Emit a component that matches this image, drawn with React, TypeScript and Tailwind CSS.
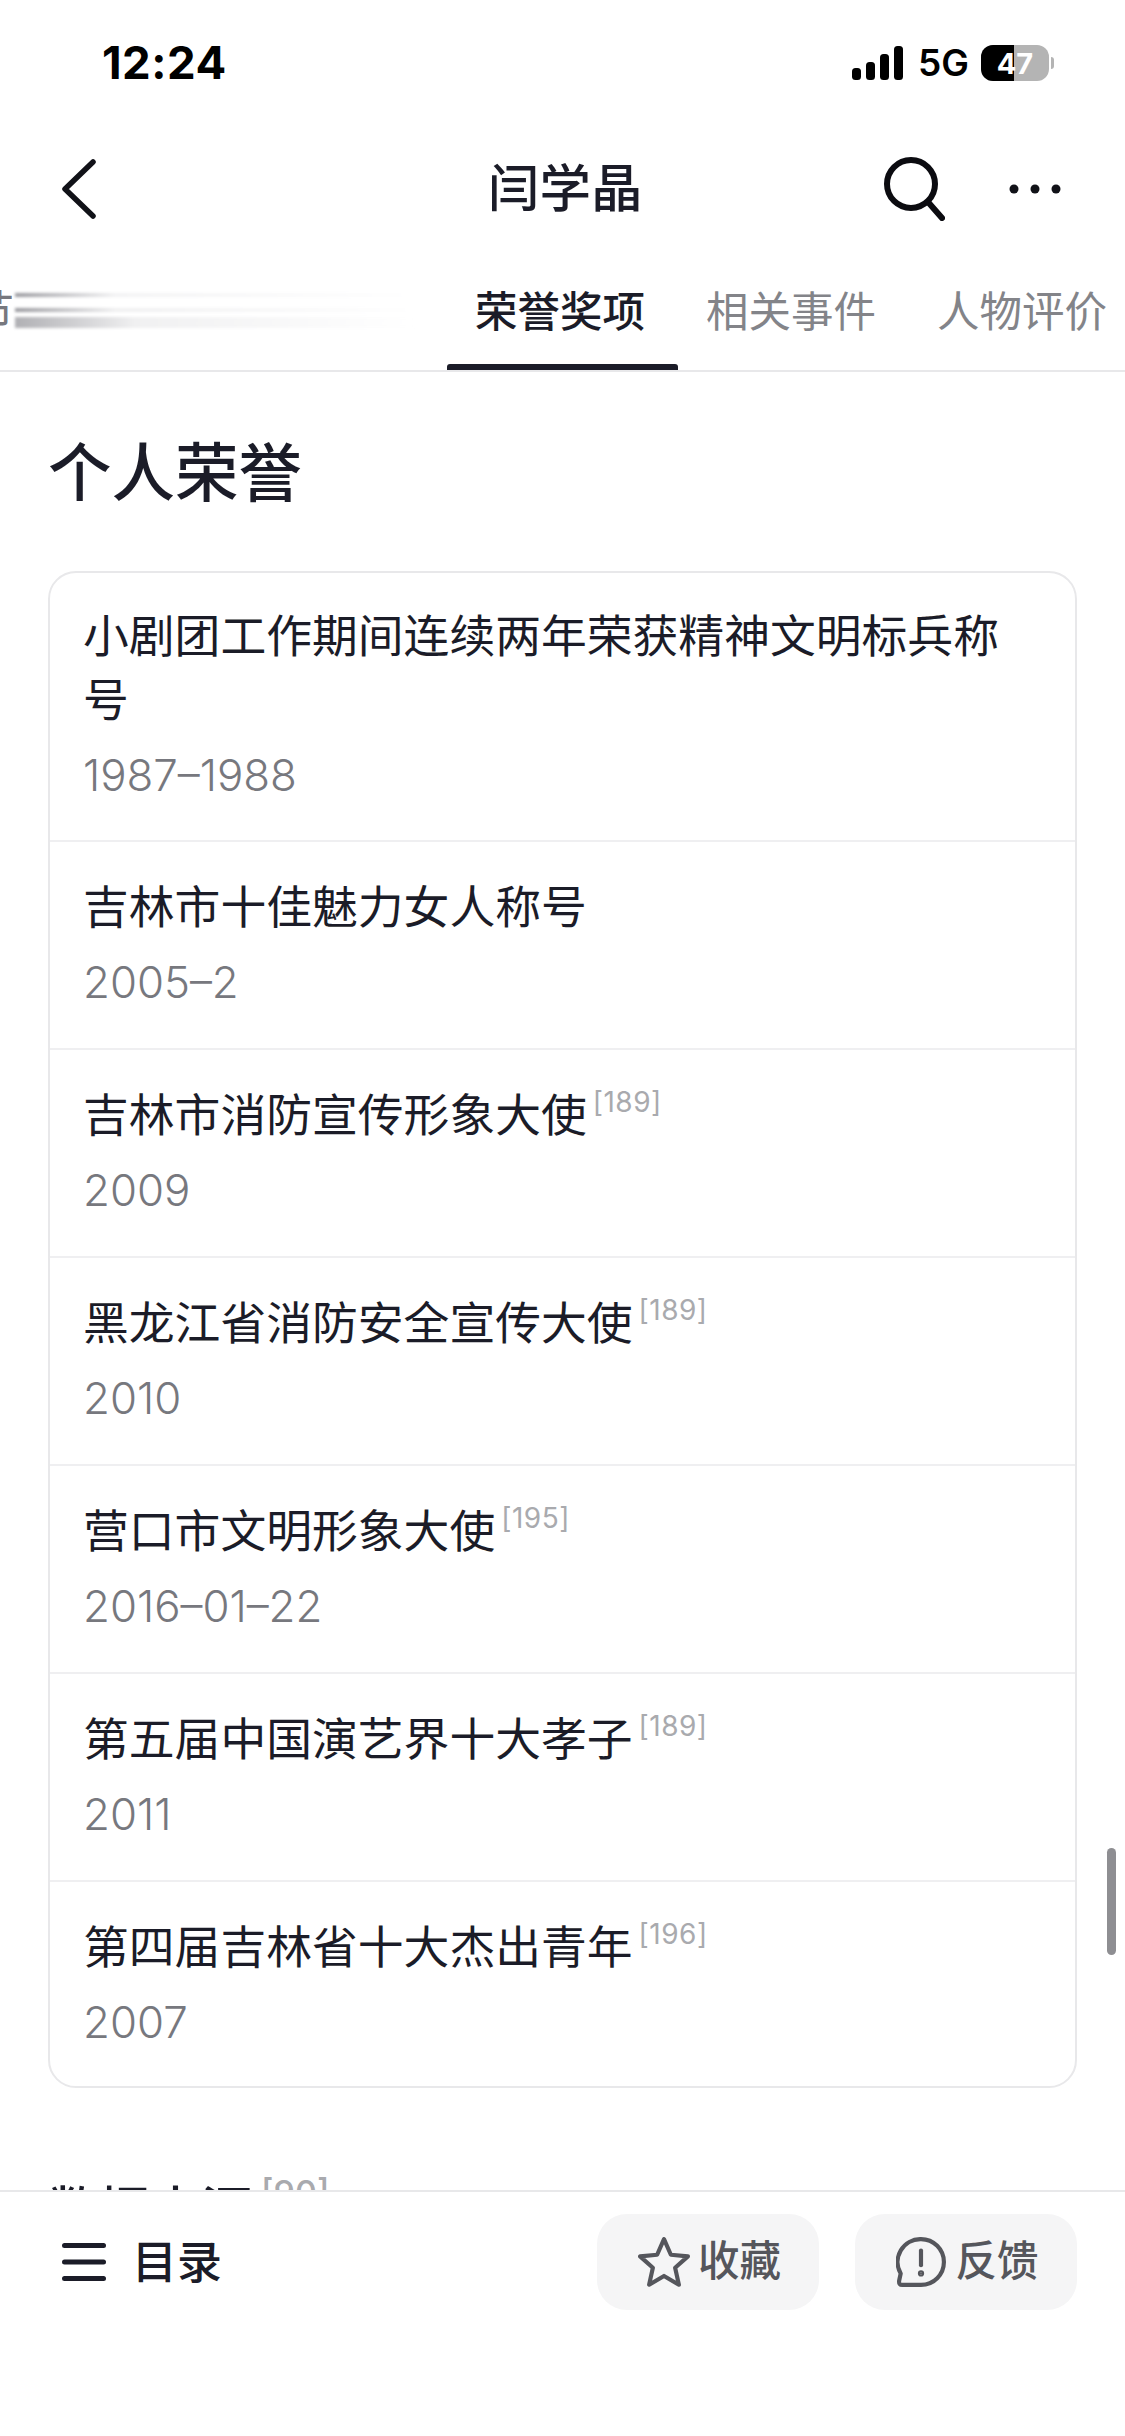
const honors = [
  { title: "小剧团工作期间连续两年荣获精神文明标兵称号", date: "1987–1988" },
  { title: "吉林市十佳魅力女人称号", date: "2005–2" },
  { title: "吉林市消防宣传形象大使", date: "2009", ref: "189" },
  { title: "黑龙江省消防安全宣传大使", date: "2010", ref: "189" },
  { title: "营口市文明形象大使", date: "2016–01–22", ref: "195" },
  { title: "第五届中国演艺界十大孝子", date: "2011", ref: "189" },
  { title: "第四届吉林省十大杰出青年", date: "2007", ref: "196" },
];

function StatusBar() {
  return (
    <div className="flex h-[124px] shrink-0 items-center justify-between pl-[102px] pr-[71px] pt-[2px]">
      <span className="text-[45.5px] font-bold tracking-[0.5px] text-black">12:24</span>
      <div className="flex items-center">
        <svg width="52" height="34" viewBox="0 0 52 34" fill="#000">
          <rect x="0" y="22" width="9" height="12" rx="3.5" />
          <rect x="14" y="16" width="9" height="18" rx="3.5" />
          <rect x="28" y="8" width="9" height="26" rx="3.5" />
          <rect x="42" y="0" width="9" height="34" rx="3.5" />
        </svg>
        <span className="ml-[14px] text-[37px] font-semibold text-black">5G</span>
        <div className="relative ml-[12px] flex h-[36px] w-[68px] overflow-hidden rounded-[12px] bg-[#b4b4b4]">
          <div className="h-full w-[33px] bg-black" />
          <span className="absolute inset-0 flex items-center justify-center text-[29px] font-bold leading-none text-white">
            47
          </span>
        </div>
        <div className="ml-[2px] h-[12px] w-[3px] rounded-r-full bg-[#b4b4b4]" />
      </div>
    </div>
  );
}

function NavBar() {
  return (
    <div className="relative flex h-[130px] shrink-0 items-center justify-between pl-[62px] pr-[64px]">
      <svg width="34" height="60" viewBox="0 0 34 60" fill="none" stroke="#111218" strokeWidth="5.5" strokeLinecap="round" strokeLinejoin="round">
        <path d="M31 3 L3 30 L31 57" />
      </svg>
      <span className="absolute left-[488px] text-[51.5px] font-medium leading-none text-[#1b1c28]">闫学晶</span>
      <div className="flex items-center gap-[64px]">
        <svg width="62" height="64" viewBox="0 0 62 64" fill="none" stroke="#0b0b10" strokeWidth="6" strokeLinecap="round">
          <circle cx="28" cy="27" r="24" />
          <path d="M45 45 L59 61" />
        </svg>
        <svg width="52" height="10" viewBox="0 0 52 10" fill="#111218">
          <circle cx="5" cy="5" r="4.5" />
          <circle cx="26" cy="5" r="4.5" />
          <circle cx="47" cy="5" r="4.5" />
        </svg>
      </div>
    </div>
  );
}

function TabBar() {
  return (
    <div className="relative flex h-[118px] shrink-0 items-center overflow-hidden border-b-2 border-[#e8e8ea]">
      <span className="ml-[-30px] text-[44px] leading-none text-[#77787e]">节</span>
      {/* blurred-out tab */}
      <div className="mb-[4px] ml-[1px] flex w-[400px] flex-col">
        <div className="h-[4px] bg-gradient-to-r from-[#9a9a9f] via-[#f3f3f4] via-25% to-white blur-[1.5px]" />
        <div className="mt-[11px] h-[4px] bg-gradient-to-r from-[#9a9a9f] via-[#f0f0f1] via-25% to-white blur-[1.5px]" />
        <div className="mt-[5px] h-[11px] bg-gradient-to-r from-[#b0b0b4] via-[#f0f0f1] via-30% to-white blur-[1.5px]" />
      </div>
      <span className="ml-[60px] text-[42.5px] font-medium leading-none text-[#1b1c28]">荣誉奖项</span>
      <span className="ml-[61px] text-[42.5px] leading-none text-[#838489]">相关事件</span>
      <span className="ml-[61px] whitespace-nowrap text-[42.5px] leading-none text-[#838489]">人物评价</span>
      <div className="absolute bottom-0 left-[447px] h-[6px] w-[231px] rounded-t-[3px] bg-[#1b1c28]" />
    </div>
  );
}

function HonorRow({ title, date, ref: refNo }: { title: string; date: string; ref?: string }) {
  return (
    <div className="border-b-2 border-[#efeff1] px-[33px] pb-[33px] pt-[34px] first:pb-[32px] first:pt-[32px] last:border-b-0 last:pb-[31px]">
      <div className="text-[45.8px] leading-[64px] text-[#1b1c28]">
        {title}
        {refNo ? (
          <sup className="relative top-[-20px] ml-[6px] align-baseline text-[28px] leading-none tracking-[0.5px] text-[#a9aaae]">
            [{refNo}]
          </sup>
        ) : null}
      </div>
      <div className="mt-[11px] text-[43.8px] font-light leading-[64px] text-[#77787e]">{date}</div>
    </div>
  );
}

function BottomBar() {
  return (
    <div className="flex h-[246px] shrink-0 items-start justify-between border-t-2 border-[#e8e8ea] bg-white pl-[62px] pr-[48px] pt-[22px]">
      <div className="flex h-[96px] items-center">
        <svg width="44" height="38" viewBox="0 0 44 38" fill="#1b1c28">
          <rect x="0" y="0" width="44" height="5" rx="2.5" />
          <rect x="0" y="16.5" width="44" height="5" rx="2.5" />
          <rect x="0" y="33" width="44" height="5" rx="2.5" />
        </svg>
        <span className="ml-[26px] text-[45px] font-medium leading-none text-[#1b1c28]">目录</span>
      </div>
      <div className="flex gap-[36px]">
        <div className="flex h-[96px] w-[222px] items-center justify-center gap-[8px] rounded-[30px] bg-[#f5f5f6] pl-[3px]">
          <svg width="52" height="50" viewBox="1 1 50 48" fill="none" stroke="#55565c" strokeWidth="4" strokeLinejoin="round">
            <path d="M26 3 L32.6 18 L49 19.6 L36.7 30.6 L40.3 46.8 L26 38.4 L11.7 46.8 L15.3 30.6 L3 19.6 L19.4 18 Z" />
          </svg>
          <span className="text-[41.5px] font-medium leading-none text-[#55565c]">收藏</span>
        </div>
        <div className="flex h-[96px] w-[222px] items-center justify-center gap-[9px] rounded-[30px] bg-[#f5f5f6] pl-[3px]">
          <svg width="50" height="50" viewBox="1 1 48 48" fill="none" stroke="#55565c" strokeWidth="4" strokeLinecap="round" strokeLinejoin="round">
            <path d="M25 3 A22 22 0 1 1 25 47 H7 Q3.5 47 4 43 L5.5 36 A22 22 0 0 1 25 3 Z" />
            <path d="M25 14 V28" />
            <circle cx="25" cy="36" r="1" fill="#55565c" />
          </svg>
          <span className="text-[41.5px] font-medium leading-none text-[#55565c]">反馈</span>
        </div>
      </div>
    </div>
  );
}

export default function App() {
  return (
    <div className="relative flex h-[2436px] w-[1125px] flex-col overflow-hidden bg-white font-['Inter','Noto_Sans_CJK_SC',sans-serif]">
      <StatusBar />
      <NavBar />
      <TabBar />
      <main className="min-h-0 flex-1 overflow-hidden px-[48px]">
        <h2 className="mt-[65px] text-[63.5px] font-medium leading-[72px] text-[#1b1c28]">个人荣誉</h2>
        <div className="mt-[62px] rounded-[28px] border-2 border-[#e8e8ea]">
          {honors.map((h) => (
            <HonorRow key={h.title} title={h.title} date={h.date} ref={h.ref} />
          ))}
        </div>
        <div className="mt-[91px] text-[51px] font-medium leading-[64px] text-[#1b1c28]">
          数据来源
          <span className="relative top-[-3px] ml-[9px] align-top text-[34px] leading-none text-[#a9aaae]">[90]</span>
        </div>
      </main>
      <BottomBar />
      <div className="absolute left-[1107px] top-[1848px] h-[107px] w-[9px] rounded-full bg-[#8e8e92]" />
    </div>
  );
}
